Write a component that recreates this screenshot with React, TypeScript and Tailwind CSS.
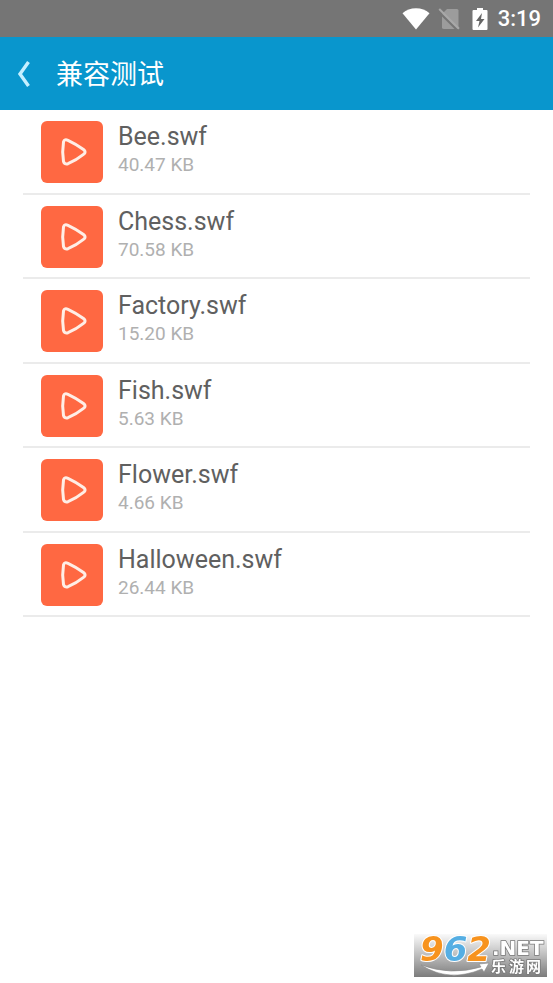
const files = [
  { name: 'Bee.swf', size: '40.47 KB' },
  { name: 'Chess.swf', size: '70.58 KB' },
  { name: 'Factory.swf', size: '15.20 KB' },
  { name: 'Fish.swf', size: '5.63 KB' },
  { name: 'Flower.swf', size: '4.66 KB' },
  { name: 'Halloween.swf', size: '26.44 KB' },
];

function StatusBar() {
  return (
    <div className="flex h-[37px] items-center justify-end bg-[#757575] pr-3 text-white">
      <svg className="h-[22px] w-7" viewBox="0 0 28 22" fill="currentColor" aria-hidden="true">
        <path d="M14 21.5 0.5 5.2C4.2 2 8.8 0.2 14 0.2s9.800 1.800 13.500 5Z" />
      </svg>
      <svg className="ml-2 h-[22px] w-[22px]" viewBox="0 0 22 22" aria-hidden="true">
        <path d="M9 1h10q1.500 0 1.500 1.500v17q0 1.500-1.500 1.500H6q-2 0-2-1.500V6Z" fill="#9c9c9c" />
        <path d="M0 3 20 23" stroke="#757575" strokeWidth="2" />
        <path d="M1.200 1 21 20.800" stroke="#a8a8a8" strokeWidth="2" />
      </svg>
      <svg className="ml-3 h-6 w-4" viewBox="0 0 16 24" aria-hidden="true">
        <path d="M5 1h6v2h3.500q1 0 1 1v18q0 1-1 1h-13q-1 0-1-1V4q0-1 1-1H5Z" fill="currentColor" />
        <path d="M10 6 4 14h3.500L6 20.500 12.500 12H9Z" fill="#666" />
      </svg>
      <span className="ml-2.5 text-[22px] leading-6 font-medium">3:19</span>
    </div>
  );
}

function FileIcon() {
  return (
    <span className="flex size-[62px] shrink-0 items-center justify-center rounded-md bg-[#ff6842]">
      <svg className="ml-1 size-7" viewBox="0 0 28 28" fill="none" aria-hidden="true">
        <path
          d="M3.500 3.900C4.100 1.700 5.800 1.400 8 2.300Q16 6 23.500 11.500Q26.700 14 23.500 16.400Q16 22.400 8 25.700Q4.500 26.800 3.500 23.500Q1.900 14 3.500 3.900Z"
          stroke="#ffeee6"
          strokeWidth="3"
          strokeLinejoin="round"
        />
      </svg>
    </span>
  );
}

function Watermark() {
  return (
    <svg
      className="fixed right-[6px] bottom-[6px] h-[43px] w-[133px] overflow-visible"
      viewBox="0 0 133 43"
      role="img"
      aria-label="962.NET 乐游网"
    >
      <defs>
        <linearGradient id="shade" x2="0" y2="1">
          <stop offset="0" stopColor="#fafafa" />
          <stop offset="0.5" stopColor="#bcbcbc" />
          <stop offset="1" stopColor="#7c7c7c" />
        </linearGradient>
      </defs>
      <path d="M0 0h133v43H0Z" fill="url(#shade)" />
      <text
        x="6"
        y="27"
        fontSize="34"
        fontFamily="'DejaVu Sans', sans-serif"
        fontWeight="700"
        fontStyle="italic"
        stroke="#fff"
        strokeWidth="2"
        paintOrder="stroke"
        strokeLinejoin="round"
      >
        <tspan fill="#f7931e">9</tspan>
        <tspan fill="#55aee3">6</tspan>
        <tspan fill="#f7931e">2</tspan>
      </text>
      <g fill="#fff" stroke="#777" strokeWidth="1.500" paintOrder="stroke" fontWeight="700">
        <text x="78" y="21" fontSize="20" fontFamily="'DejaVu Sans', sans-serif">.NET</text>
        <g fontSize="15" fontFamily="'Noto Sans CJK SC', sans-serif">
          <text x="77" y="38">乐</text>
          <text x="95" y="38">游</text>
          <text x="112" y="38">网</text>
        </g>
      </g>
      <path
        d="M7 31Q37 42 67 33l-2-3 10-1-5 9-2-3Q35 49 7 31Z"
        fill="#fff"
        stroke="#888"
        strokeWidth="0.600"
      />
    </svg>
  );
}

export default function App() {
  return (
    <div className="min-h-screen bg-white font-[Roboto,'Noto_Sans_CJK_SC',sans-serif]">
      <StatusBar />
      <header className="flex h-[73px] items-center bg-[#0996cd] text-white">
        <button type="button" aria-label="返回" className="flex h-full w-14 items-center pl-4">
          <svg className="h-[26px] w-4" viewBox="0 0 16 26" fill="none" aria-hidden="true">
            <path d="M12.500 1 4 13l8.500 12" stroke="#c5efff" strokeWidth="3.400" />
          </svg>
        </button>
        <h1 className="pt-0.5 text-[27px] leading-9 font-normal">兼容测试</h1>
      </header>
      <main className="px-[23px]">
        <ul className="grid h-[507px] grid-rows-6">
          {files.map((file) => (
            <li key={file.name} className="flex border-b-2 border-[#ebebeb] pt-[11px] pl-[18px]">
              <FileIcon />
              <div className="ml-[15px]">
                <p className="text-[25px] leading-8 text-[#606060]">{file.name}</p>
                <p className="text-[19px] leading-6 text-[#b0b0b0]">{file.size}</p>
              </div>
            </li>
          ))}
        </ul>
      </main>
      <Watermark />
    </div>
  );
}
